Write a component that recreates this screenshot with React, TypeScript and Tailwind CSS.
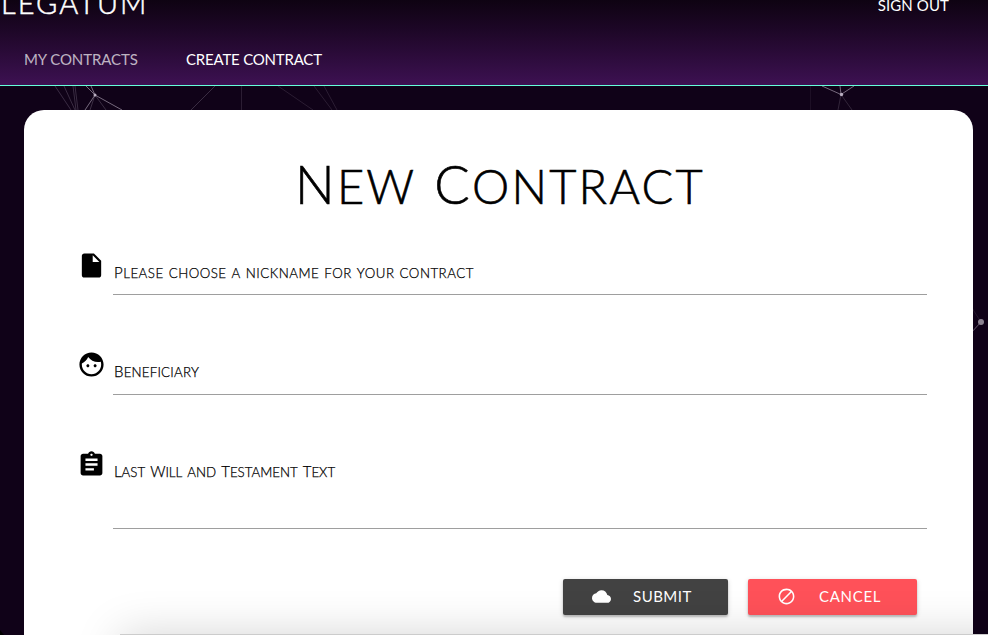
const font = "font-['Lato','Open_Sans',sans-serif]";

function Words({ text, className, word }: { text: string; className: string; word: string }) {
  return (
    <span className={`flex whitespace-nowrap uppercase ${className}`}>
      {text.split(" ").map((w, i) => (
        <span key={i} className={`block ${word}`}>{w}</span>
      ))}
    </span>
  );
}

const labelWord = "text-[13.3px] leading-[18px] [-webkit-text-stroke:0.25px_#000]";
const capWord = "text-[13.3px] leading-[18px] [-webkit-text-stroke:0.25px_#000] first-letter:text-[15px]";

function Icon({ d, className }: { d: string; className: string }) {
  return (
    <svg viewBox="0 0 24 24" fill="currentColor" className={`shrink-0 ${className}`}>
      <path d={d} />
    </svg>
  );
}

const FILE = "M6 2c-1.1 0-1.99.9-1.99 2L4 20c0 1.1.89 2 1.99 2H18c1.1 0 2-.9 2-2V8l-6-6H6zm7 7V3.5L18.5 9H13z";
const FACE = "M9 11.75c-.69 0-1.25.56-1.25 1.25s.56 1.25 1.25 1.25 1.25-.56 1.25-1.25-.56-1.25-1.25-1.25zm6 0c-.69 0-1.25.56-1.25 1.25s.56 1.25 1.25 1.25 1.25-.56 1.25-1.25-.56-1.25-1.25-1.25zM12 2C6.48 2 2 6.48 2 12s4.48 10 10 10 10-4.48 10-10S17.52 2 12 2zm0 18c-4.41 0-8-3.59-8-8 0-.29.02-.58.05-.86 2.36-1.05 4.23-2.98 5.21-5.37C11.07 8.33 14.05 10 17.42 10c.78 0 1.53-.09 2.25-.26.21.71.33 1.47.33 2.26 0 4.41-3.59 8-8 8z";
const ASSIGNMENT = "M19 3h-4.18C14.4 1.84 13.3 1 12 1c-1.3 0-2.4.84-2.82 2H5c-1.1 0-2 .9-2 2v14c0 1.1.9 2 2 2h14c1.1 0 2-.9 2-2V5c0-1.1-.9-2-2-2zm-7 0c.55 0 1 .45 1 1s-.45 1-1 1-1-.45-1-1 .45-1 1-1zm2 14H7v-2h7v2zm3-4H7v-2h10v2zm0-4H7V7h10v2z";
const CLOUD = "M19.35 10.04C18.67 6.59 15.64 4 12 4 9.11 4 6.6 5.64 5.35 8.04 2.34 8.36 0 10.91 0 14c0 3.31 2.69 6 6 6h13c2.76 0 5-2.24 5-5 0-2.64-2.05-4.78-4.65-4.96z";
const BLOCK = "M12 2C6.48 2 2 6.48 2 12s4.48 10 10 10 10-4.48 10-10S17.52 2 12 2zM4 12c0-4.42 3.58-8 8-8 1.85 0 3.55.63 4.9 1.69L5.69 16.9C4.63 15.55 4 13.85 4 12zm8 8c-1.85 0-3.55-.63-4.9-1.69L18.31 7.1C19.37 8.45 20 10.15 20 12c0 4.42-3.58 8-8 8z";

export default function App() {
  return (
    <div className={`relative h-[635px] w-full overflow-hidden bg-[#100218] ${font}`}>
      <header className="flex h-[86px] flex-col justify-between overflow-hidden border-b border-[#64ffda] bg-linear-to-b from-[#0e0312] to-[#3d1152] text-white">
        <div className="flex h-[24px] items-end justify-between pr-[39px]">
          <span className="mb-[6px] pl-px text-[29px] leading-[30px] font-light tracking-[2px] [-webkit-text-stroke:0.5px_#fff]">LEGATUM</span>
          <span className="pb-[9px] text-[15px] leading-[20px] tracking-[0.1px]">SIGN OUT</span>
        </div>
        <nav className="flex gap-12 pb-[16px] pl-6 text-[15px] leading-[20px]">
          <span className="w-[114px] whitespace-nowrap tracking-[-0.1px] text-white/70">MY CONTRACTS</span>
          <span className="whitespace-nowrap tracking-[-0.2px]">CREATE CONTRACT</span>
        </nav>
      </header>

      {/* Constellation behind the card */}
      <svg className="absolute top-[86px] left-0 h-[549px] w-[988px]" viewBox="0 86 988 549" fill="none" stroke="#b9adc0" strokeWidth="1">
        <path d="M95 95L85 110M95 95L122 110M95 95L91 86M95 95L86 86" opacity=".6" />
        <path d="M95 95L90 110M95 95L106 110M55 86L71 110M64 86L75 110M73 86L76 110M75 86L78 110M215 86L191 110" opacity=".25" />
        <path d="M241.500 86V110M278 86L313 110M314 86L332 110M324 86L337 110" opacity=".16" />
        <path d="M841 94.500L822 86M841 94.500L854 86M841 94.500L840 86" opacity=".6" />
        <path d="M841 94.500L838 110M841 94.500L852 110" opacity=".2" />
        <path d="M810.500 86V110" opacity=".08" />
        <path d="M981 322L970 334" opacity=".5" />
        <path d="M981 322L970 305" opacity=".12" />
        <circle cx="95" cy="95" r="1.500" fill="#b9adc0" stroke="none" />
        <circle cx="841.500" cy="94.500" r="1.700" fill="#b9adc0" stroke="none" />
        <circle cx="981" cy="322" r="3" fill="#8c8391" stroke="none" />
        <path d="M0 630V635H4Z" fill="#000" stroke="none" />
      </svg>

      <main className="relative mt-6 ml-6 h-[700px] w-[949px] rounded-[20px] bg-white pt-[41px] text-black">
        <h1 className="flex h-[69px] justify-center pl-[3px]">
          <Words text="New Contract" className="items-baseline gap-[18px] font-light" word="text-[47px] leading-[66px] tracking-[2.2px] [-webkit-text-stroke:0.6px_#000] first-letter:text-[52.5px]" />
        </h1>

        <div className="ml-[53px] w-[850px] pt-[20px]">
          <div className="flex h-[99.500px]">
            <Icon d={FILE} className="mt-[11px] h-[29px] w-[29px]" />
            <div className="ml-[7px] h-[55px] w-[814px] border-b border-[#9e9e9e] pt-[23px] pl-px">
              <Words text="Please choose a nickname for your contract" className="items-baseline gap-[5px] font-light tracking-[0.5px]" word={`${labelWord} first:first-letter:text-[15px]`} />
            </div>
          </div>
          <div className="flex h-[99.500px]">
            <Icon d={FACE} className="mt-[10.500px] h-[29px] w-[29px]" />
            <div className="ml-[7px] h-[55px] w-[814px] border-b border-[#9e9e9e] pt-[22px] pl-px">
              <Words text="Beneficiary" className="items-baseline font-light tracking-[0.2px]" word={capWord} />
            </div>
          </div>
          <div className="flex h-[125px]">
            <Icon d={ASSIGNMENT} className="mt-[11px] h-[29px] w-[29px]" />
            <div className="ml-[7px] h-[90px] w-[814px] border-b border-[#9e9e9e] pt-[23px] pl-px">
              <span className="flex items-baseline gap-[5px]">
                <Words text="Last Will" className="items-baseline gap-[5px] font-light" word={capWord} />
                <Words text="and" className="items-baseline font-light" word={labelWord} />
                <Words text="Testament Text" className="items-baseline gap-[5px] font-light" word={capWord} />
              </span>
            </div>
          </div>
        </div>

        <div className="mt-[15px] mr-[56px] flex justify-end gap-5 text-[15px] text-white">
          <button className="flex h-9 w-[165px] items-center rounded-[2px] bg-[#424242] pl-[29px] shadow-[0_2px_2px_rgba(0,0,0,.2),0_1px_5px_rgba(0,0,0,.15)]">
            <Icon d={CLOUD} className="-mt-px h-[19px] w-[19px]" />
            <span className="-mt-0.5 ml-[22px] tracking-[.5px]">SUBMIT</span>
          </button>
          <button className="flex h-9 w-[169px] items-center rounded-[2px] bg-[#ff5159] pl-[29px] shadow-[0_2px_2px_rgba(0,0,0,.2),0_1px_5px_rgba(0,0,0,.15)]">
            <Icon d={BLOCK} className="-mt-px h-[19px] w-[19px]" />
            <span className="-mt-0.5 ml-[23px] tracking-[.7px]">CANCEL</span>
          </button>
        </div>
      </main>

      {/* Soft shadow rising from the bottom edge */}
      <div className="pointer-events-none absolute top-[634px] left-[120px] h-[100px] w-[1000px] bg-[#cccccc] shadow-[0_0_45px_rgba(0,0,0,.17)]" />
    </div>
  );
}
